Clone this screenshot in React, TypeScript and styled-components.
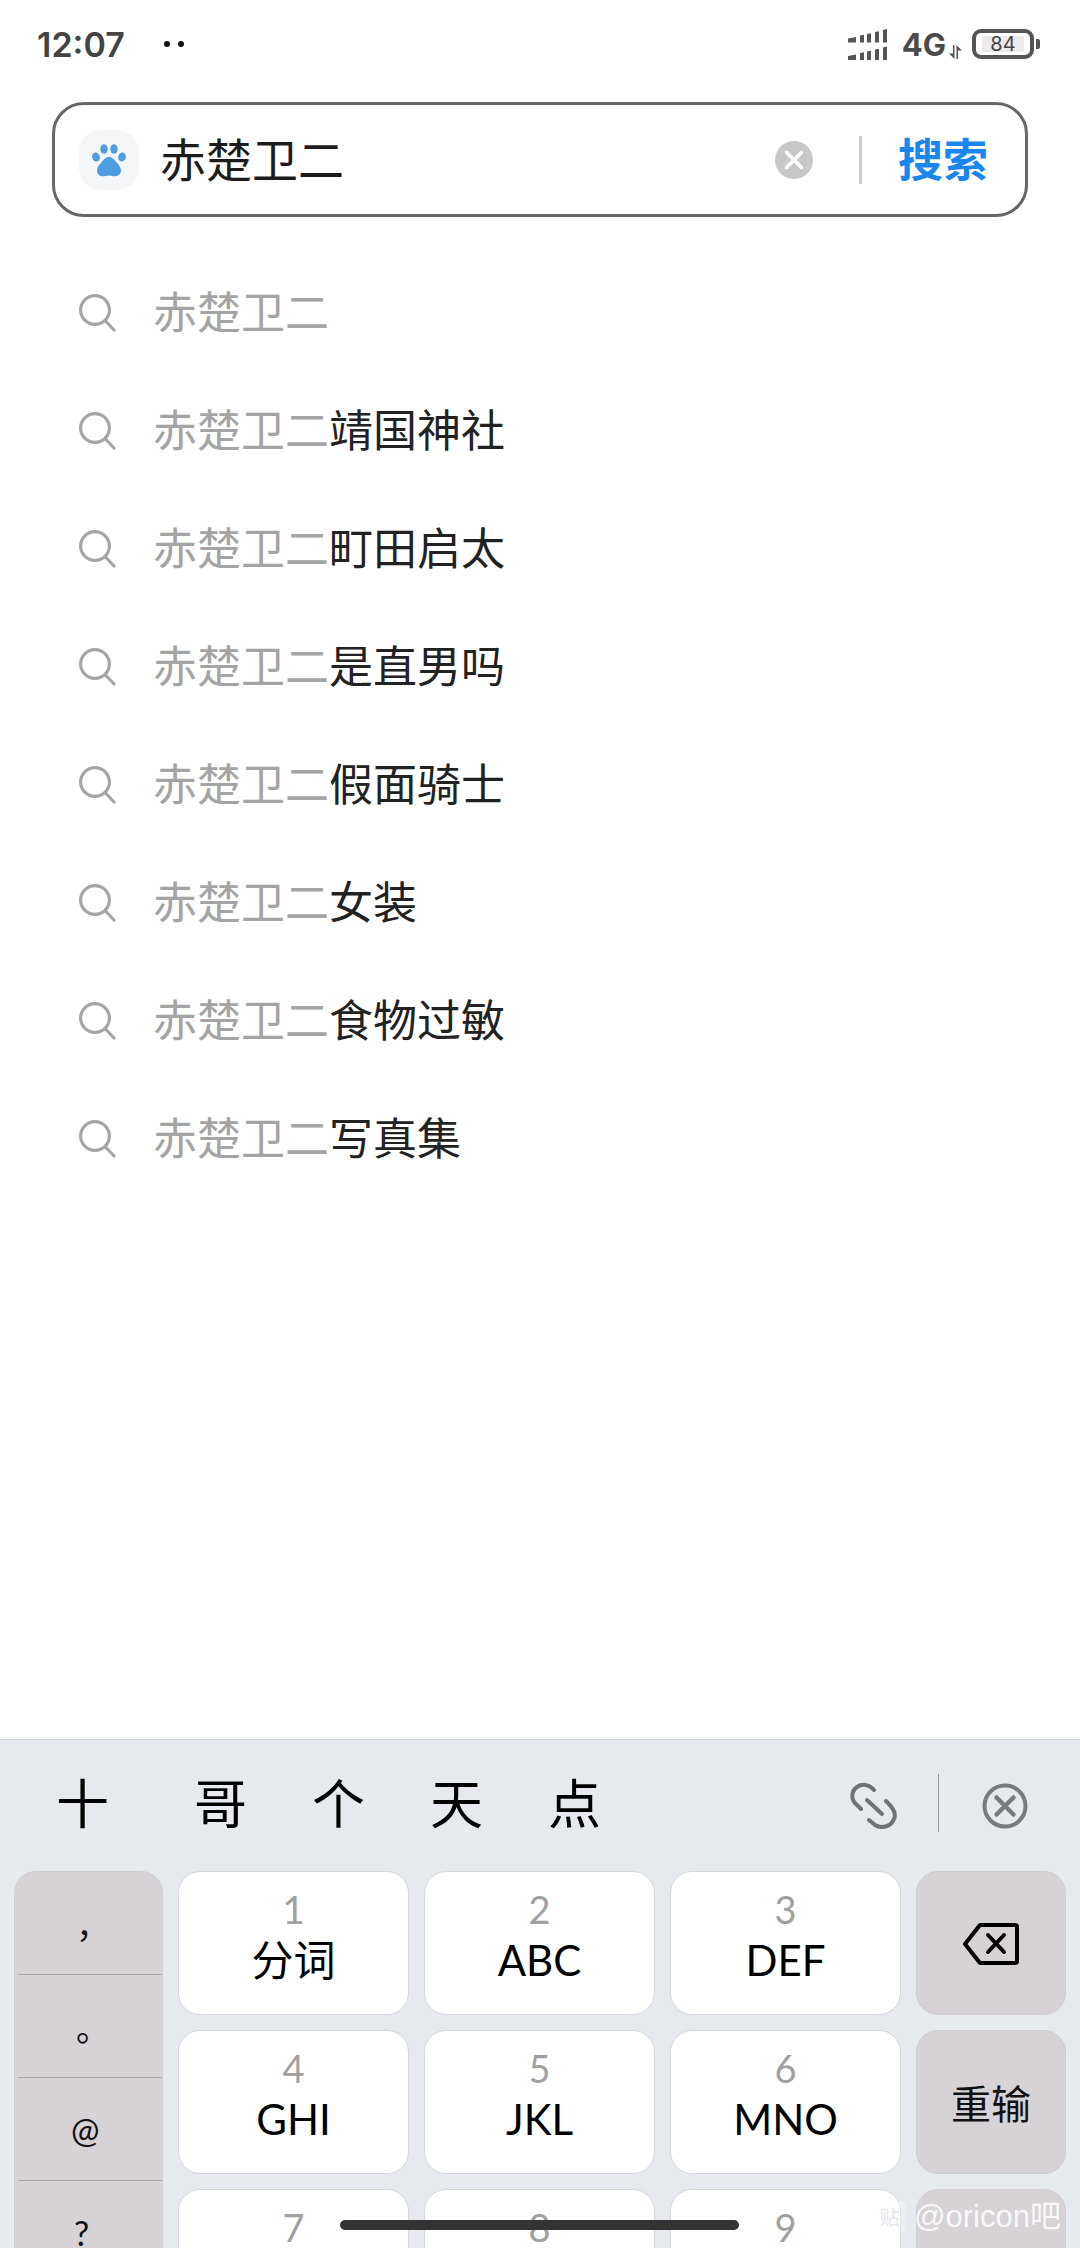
import React from "react";
import styled, { createGlobalStyle } from "styled-components";

const GlobalStyle = createGlobalStyle`
  html, body {
    margin: 0;
    padding: 0;
    background: #fff;
  }
  * {
    box-sizing: border-box;
  }
`;

const CJK = `"Noto Sans CJK SC", "Noto Sans", sans-serif`;
const LATIN = `Lato, "Noto Sans CJK SC", sans-serif`;

const Page = styled.div`
  position: relative;
  width: 1080px;
  height: 2248px;
  overflow: hidden;
  display: flex;
  flex-direction: column;
  background: #fff;
  font-family: ${CJK};
`;

const StatusBar = styled.div`
  height: 88px;
  flex: none;
  display: flex;
  align-items: center;
  padding: 0 40px 0 37px;
`;

const Time = styled.span`
  font-family: Inter, sans-serif;
  font-size: 34px;
  font-weight: 600;
  color: #444;
`;

const Dots = styled.div`
  display: flex;
  gap: 8px;
  margin-left: 39px;
`;

const Dot = styled.i`
  width: 6px;
  height: 6px;
  border-radius: 50%;
  background: #111;
`;

const StatusRight = styled.div`
  margin-left: auto;
  display: flex;
  align-items: center;
`;

const NetLabel = styled.span`
  font-family: Inter, sans-serif;
  font-size: 31px;
  font-weight: 700;
  color: #4a4a4a;
  margin-left: 14px;
`;

const Battery = styled.div`
  width: 62px;
  height: 30px;
  margin-left: 10px;
  border: 4px solid #555;
  border-radius: 9px;
  display: flex;
  align-items: center;
  justify-content: center;
`;

const BatteryLevel = styled.span`
  width: 42px;
  height: 16px;
  display: flex;
  align-items: center;
  justify-content: center;
  background: #eee9ed;
  font-family: Inter, sans-serif;
  font-size: 20px;
  color: #444;
`;

const BatteryTip = styled.i`
  width: 4px;
  height: 10px;
  margin-left: 2px;
  border-radius: 0 2px 2px 0;
  background: #555;
`;

const SearchBox = styled.div`
  flex: none;
  width: 976px;
  height: 115px;
  margin: 14px 0 0 52px;
  padding: 0 37px 0 24px;
  border: 3px solid #666;
  border-radius: 32px;
  display: flex;
  align-items: center;
`;

const AppIcon = styled.div`
  width: 60px;
  height: 60px;
  border-radius: 22px;
  background: #f5f6f7;
  display: flex;
  align-items: center;
  justify-content: center;
`;

const Query = styled.span`
  margin-left: 21px;
  padding-bottom: 6px;
  font-size: 46px;
  line-height: 60px;
  color: #1c1c1c;
`;

const ClearButton = styled.div`
  margin-left: auto;
  width: 38px;
  height: 38px;
`;

const SearchDivider = styled.i`
  width: 3px;
  height: 48px;
  margin: 0 36px 0 46px;
  background: #ccc;
`;

const SearchAction = styled.span`
  padding-bottom: 4px;
  font-size: 45px;
  font-weight: 700;
  line-height: 60px;
  color: #1a86ee;
`;

const Suggestions = styled.div`
  margin-top: 37px;
  display: flex;
  flex-direction: column;
`;

const Suggestion = styled.div`
  height: 118px;
  padding-left: 79px;
  display: flex;
  align-items: center;
  gap: 36px;
`;

const SuggestionText = styled.span`
  padding-bottom: 6px;
  font-size: 44px;
  line-height: 60px;
  color: #222;

  b {
    font-weight: 400;
    color: #a4a4a4;
  }
`;

const Keyboard = styled.div`
  flex: none;
  margin-top: auto;
  height: 509px;
  overflow: hidden;
  background: #e6eaee;
  border-top: 1px solid #cfd2d6;
`;

const CandidateBar = styled.div`
  height: 131px;
  display: flex;
  align-items: center;
  padding: 0 52px 0 56px;
`;

const Candidate = styled.span<{ $gap: number }>`
  width: 53px;
  margin-right: ${(p) => p.$gap}px;
  padding-bottom: 10px;
  font-size: 53px;
  line-height: 60px;
  color: #000;
`;

const CandidateTools = styled.div`
  margin-left: auto;
  display: flex;
  align-items: center;
`;

const ToolDivider = styled.i`
  width: 1px;
  height: 58px;
  margin: 0 43px 5px 41px;
  background: #999;
`;

const KeyGrid = styled.div`
  display: grid;
  grid-template-columns: 149px 231px 231px 231px 150px;
  grid-auto-rows: 144px;
  gap: 15px;
  padding-left: 14px;
`;

const PunctuationKey = styled.div`
  grid-row: span 3;
  height: 462px;
  display: flex;
  flex-direction: column;
  background: #d6d2d6;
  border: 1px solid #cfccd1;
  border-radius: 22px;
`;

const PunctuationItem = styled.div<{ $indent: number }>`
  height: 103px;
  flex: none;
  margin-left: 3px;
  padding-left: ${(p) => p.$indent}px;
  border-bottom: 1px solid #aaa8ad;
  display: flex;
  align-items: center;
  font-family: ${LATIN};
  font-size: 34px;
  color: #111;
`;

const Key = styled.div`
  padding-top: 15px;
  display: flex;
  flex-direction: column;
  align-items: center;
  background: #fff;
  border: 1px solid #d6d6dc;
  border-radius: 22px;
`;

const Digit = styled.span`
  font-family: ${LATIN};
  font-size: 38px;
  line-height: 44px;
  color: #a0a0a0;
`;

const Letters = styled.span`
  margin-top: 4px;
  font-family: ${LATIN};
  font-size: 42px;
  line-height: 50px;
  color: #000;
`;

const ActionKey = styled.div`
  display: flex;
  align-items: center;
  justify-content: center;
  background: #d6d2d6;
  border: 1px solid #cfccd1;
  border-radius: 22px;
  font-size: 40px;
  color: #111;
`;

const HomeIndicator = styled.i`
  position: absolute;
  left: 340px;
  top: 2220px;
  width: 399px;
  height: 10px;
  border-radius: 5px;
  background: #333;
`;

const Watermark = styled.div`
  position: absolute;
  left: 873px;
  top: 2199px;
  display: flex;
  align-items: center;
  gap: 8px;
  white-space: nowrap;
  font-family: "Liberation Sans", "Noto Sans CJK SC", sans-serif;
  font-size: 31px;
  line-height: 36px;
  color: rgba(255, 255, 255, 0.85);
`;

const WatermarkBadge = styled.span`
  width: 33px;
  height: 33px;
  border-radius: 8px;
  background: rgba(255, 255, 255, 0.3);
  display: flex;
  align-items: center;
  justify-content: center;
  font-size: 20px;
  color: rgba(225, 225, 230, 0.9);
  font-family: ${CJK};
`;

const SearchIcon = () => (
  <svg width="38" height="38" viewBox="0 0 38 38" fill="none" stroke="#a5a5a5" strokeWidth="3.2" strokeLinecap="round">
    <circle cx="16" cy="16" r="14.4" />
    <path d="M26.5 27l8.5 9" />
  </svg>
);

const PawIcon = () => (
  <svg width="34" height="34" viewBox="0 0 34 34" fill="#4d9de0">
    <ellipse cx="4" cy="14" rx="3.8" ry="4.6" transform="rotate(-15 4 14)" />
    <ellipse cx="12" cy="6" rx="3.7" ry="4.8" />
    <ellipse cx="22" cy="6" rx="3.7" ry="4.8" />
    <ellipse cx="30" cy="14" rx="3.8" ry="4.6" transform="rotate(15 30 14)" />
    <path d="M17 14c3.4 0 5.2 2.6 7.6 5.6 2.2 2.6 4.4 4.6 4.4 8 0 3.6-2.6 5.6-5.4 5.6-2.6 0-4.4-.8-6.6-.8s-4 .8-6.6.8C7.6 33.200 5 31.200 5 27.600c0-3.400 2.200-5.400 4.400-8C11.800 16.600 13.600 14 17 14z" />
  </svg>
);

const ClearIcon = () => (
  <svg width="38" height="38" viewBox="0 0 38 38">
    <circle cx="19" cy="19" r="19" fill="#c8c6c9" />
    <path d="M11.500 11.500l15 15M26.500 11.500l-15 15" stroke="#fff" strokeWidth="3.600" strokeLinecap="round" />
  </svg>
);

const SignalIcon = () => (
  <svg width="40" height="31" viewBox="0 0 40 31" fill="#555">
    <path d="M0 9.500l8-1.500v5.500H0zM12 6.500l4-.7v7.700h-4zM19 5l4-.7v9.200h-4zM27 3l4-.7v11.200h-4zM35 1l4-1v13.500h-4z" />
    <path d="M0 27l8-1.500V31H0zM12 24l4-.7V31h-4zM19 22.500l4-.7V31h-4zM27 20.500l4-.7V31h-4zM35 18.500l4-1V31h-4z" />
  </svg>
);

const DataArrows = () => (
  <svg width="13" height="14" viewBox="0 0 13 14" fill="#555" style={{ marginTop: 16, marginLeft: 3 }}>
    <path d="M4 0h1.500v14L0 8.500h4zM7.500 0L13 5.500H9V14H7.500z" />
  </svg>
);

const LinkIcon = () => (
  <svg width="47" height="47" viewBox="0 0 47 47" fill="none" stroke="#6f7173" strokeWidth="4" strokeLinecap="round">
    <path d="M17 18l15 14" />
    <path d="M24 8c-4-5-11-7-17-3-6 4-6 13-1 17l5 5" />
    <path d="M36 19c5 5 11 11 8 18-3 8-13 10-19 6l-6-5" />
  </svg>
);

const CloseCircleIcon = () => (
  <svg width="46" height="46" viewBox="0 0 46 46" fill="none" stroke="#787a7b" strokeWidth="4" strokeLinecap="round">
    <circle cx="23" cy="23" r="20.500" />
    <path d="M14.500 14.500l17 17M31.500 14.500l-17 17" strokeWidth="4.500" />
  </svg>
);

const BackspaceIcon = () => (
  <svg width="56" height="42" viewBox="0 0 56 42" fill="none" stroke="#000" strokeWidth="4" strokeLinejoin="round" strokeLinecap="round" style={{ marginTop: 2 }}>
    <path d="M17 2h35a2 2 0 0 1 2 2v34a2 2 0 0 1-2 2H17L2 21z" />
    <path d="M25 12l16 17M41 12L25 29" />
  </svg>
);

const suggestions = ["", "靖国神社", "町田启太", "是直男吗", "假面骑士", "女装", "食物过敏", "写真集"];

const candidates: [string, number][] = [
  ["十", 85],
  ["哥", 65],
  ["个", 65],
  ["天", 65],
  ["点", 0],
];

const punctuation: [string, number][] = [
  ["，", 58],
  ["。", 58],
  ["@", 53],
  ["?", 56],
];

const App: React.FC = () => {
  return (
    <Page>
      <GlobalStyle />
      <StatusBar>
        <Time>12:07</Time>
        <Dots>
          <Dot />
          <Dot />
        </Dots>
        <StatusRight>
          <SignalIcon />
          <NetLabel>4G</NetLabel>
          <DataArrows />
          <Battery>
            <BatteryLevel>84</BatteryLevel>
          </Battery>
          <BatteryTip />
        </StatusRight>
      </StatusBar>

      <SearchBox>
        <AppIcon>
          <PawIcon />
        </AppIcon>
        <Query>赤楚卫二</Query>
        <ClearButton>
          <ClearIcon />
        </ClearButton>
        <SearchDivider />
        <SearchAction>搜索</SearchAction>
      </SearchBox>

      <Suggestions>
        {suggestions.map((rest) => (
          <Suggestion key={rest}>
            <SearchIcon />
            <SuggestionText>
              <b>赤楚卫二</b>
              {rest}
            </SuggestionText>
          </Suggestion>
        ))}
      </Suggestions>

      <Keyboard>
        <CandidateBar>
          {candidates.map(([word, gap]) => (
            <Candidate key={word} $gap={gap}>
              {word}
            </Candidate>
          ))}
          <CandidateTools>
            <LinkIcon />
            <ToolDivider />
            <CloseCircleIcon />
          </CandidateTools>
        </CandidateBar>
        <KeyGrid>
          <PunctuationKey>
            {punctuation.map(([mark, indent]) => (
              <PunctuationItem key={mark} $indent={indent}>
                {mark}
              </PunctuationItem>
            ))}
          </PunctuationKey>
          <Key>
            <Digit>1</Digit>
            <Letters>分词</Letters>
          </Key>
          <Key>
            <Digit>2</Digit>
            <Letters>ABC</Letters>
          </Key>
          <Key>
            <Digit>3</Digit>
            <Letters>DEF</Letters>
          </Key>
          <ActionKey>
            <BackspaceIcon />
          </ActionKey>
          <Key>
            <Digit>4</Digit>
            <Letters>GHI</Letters>
          </Key>
          <Key>
            <Digit>5</Digit>
            <Letters>JKL</Letters>
          </Key>
          <Key>
            <Digit>6</Digit>
            <Letters>MNO</Letters>
          </Key>
          <ActionKey>重输</ActionKey>
          <Key>
            <Digit>7</Digit>
          </Key>
          <Key>
            <Digit>8</Digit>
          </Key>
          <Key>
            <Digit>9</Digit>
          </Key>
          <ActionKey />
        </KeyGrid>
      </Keyboard>

      <HomeIndicator />
      <Watermark>
        <WatermarkBadge>贴</WatermarkBadge>
        @oricon吧
      </Watermark>
    </Page>
  );
};

export default App;
